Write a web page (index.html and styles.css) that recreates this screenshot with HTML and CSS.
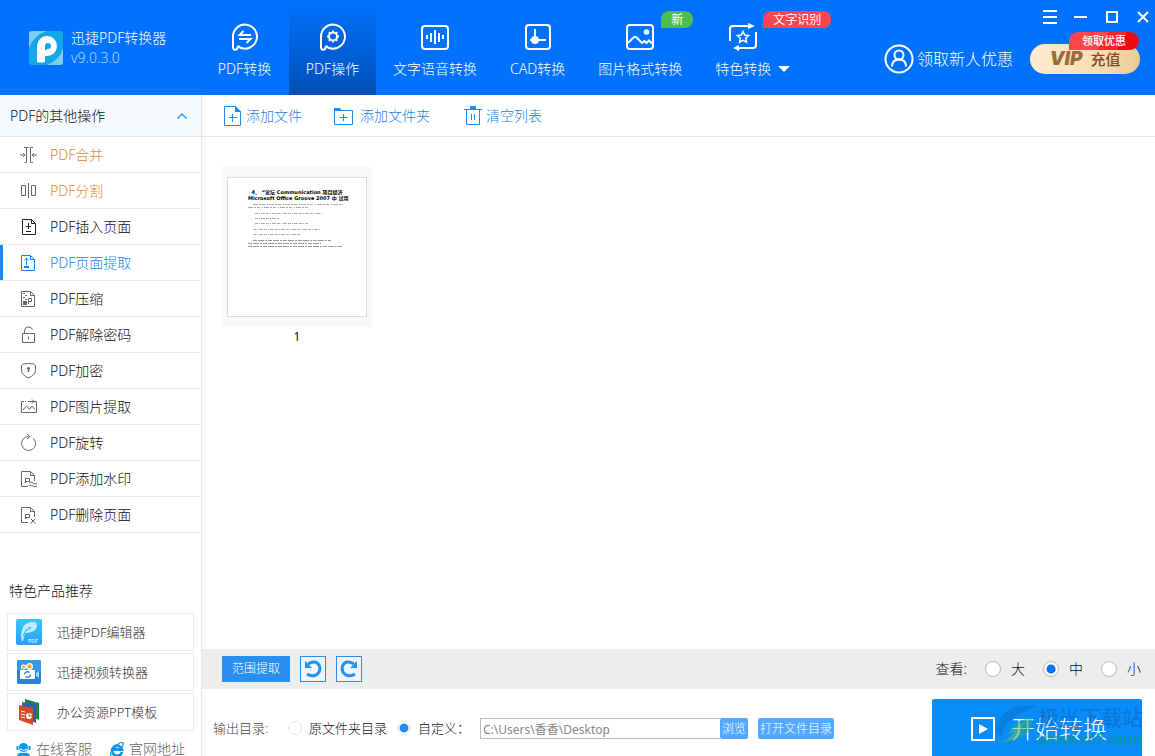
FILE: index.html
```html
<!DOCTYPE html>
<html lang="zh-CN">
<head>
<meta charset="utf-8">
<title>迅捷PDF转换器</title>
<link rel="stylesheet" href="styles.css">
</head>
<body>
<header class="header">
  <div class="brand">
    <svg class="brand-logo" width="34" height="34" viewBox="0 0 34 34" aria-hidden="true">
      <rect width="34" height="34" rx="3" fill="#12a8e8"/>
      <path d="M0 3Q0 0 3 0H18Q5 4 0 17ZM34 17V31Q34 34 31 34H18Q31 29 34 17Z" fill="#7dcdf5"/>
      <path d="M8 31V14A10 10 0 1 1 18.500 25H16V31Q12 32 8 31Z" fill="#fff"/>
      <path d="M16 20V15a3 3 0 1 1 3 3h-1Z" fill="#12a8e8"/>
    </svg>
    <div class="brand-text"><h1>迅捷PDF转换器</h1><span>v9.0.3.0</span></div>
  </div>
  <nav class="nav">
    <a class="nav-item" href="#convert">
      <svg width="28" height="28" viewBox="0 0 28 28" class="line2"><path d="M2 25V14A12 12 0 1 1 9 24.500Q6.500 22 6.500 25A2.300 2.300 0 0 1 2 25"/><path d="M20 12H8.500L12.500 8M8 16H19.500L15.500 20"/></svg>
      <span>PDF转换</span></a>
    <a class="nav-item active" href="#operate">
      <svg width="28" height="28" viewBox="0 0 28 28" class="line2"><path d="M2 25V14A12 12 0 1 1 9 24.500Q6.500 22 6.500 25A2.300 2.300 0 0 1 2 25"/><circle cx="14" cy="13.500" r="4"/><path d="M14 7.500v2M14 17.500v2M8 13.500h2M18 13.500h2M9.800 9.300l1.400 1.400M16.800 16.300l1.400 1.400M9.800 17.700l1.400-1.400M16.800 10.700l1.400-1.400"/></svg>
      <span>PDF操作</span></a>
    <a class="nav-item" href="#speech">
      <svg width="28" height="28" viewBox="0 0 28 28" class="line2"><rect x="1" y="3" width="26" height="23" rx="3"/><path d="M6 12v4M10 10v9M14 7v14M18 10v9M22 12v4"/></svg>
      <span>文字语音转换</span></a>
    <a class="nav-item" href="#cad">
      <svg width="28" height="28" viewBox="0 0 28 28" class="line2"><rect x="2" y="2" width="24" height="24" rx="3"/><path d="M11 6v11h11M6 17h5"/><circle cx="11" cy="17" r="3" fill="#fff"/></svg>
      <span>CAD转换</span></a>
    <a class="nav-item" href="#image">
      <svg width="28" height="28" viewBox="0 0 28 28" class="line2"><rect x="1" y="2" width="26" height="24" rx="3"/><path d="M2 20L7.500 14.500Q9 13 10.500 14.500L16 20L18.500 18L20.500 20L23 17.500L26 20.500"/><circle cx="20.500" cy="9" r="1.800" fill="#fff"/></svg>
      <span>图片格式转换</span><b class="badge badge-new">新</b></a>
    <a class="nav-item nav-more" href="#special">
      <svg width="28" height="28" viewBox="0 0 28 28" class="line2"><path d="M1 18V6Q1 3 4 3H20M27 9V22Q27 25 24 25H9"/><path d="M19 0l7 3-7 3ZM10 22l-6 3 6 3Z" fill="#fff" stroke="none"/><path d="M14 8.500l1.700 3.600 3.900.5-2.900 2.700.8 3.900-3.500-1.900-3.500 1.900.8-3.900-2.900-2.700 3.900-.5Z" stroke-width="1.500"/></svg>
      <span>特色转换</span><i class="caret"></i><b class="badge badge-ocr">文字识别</b></a>
  </nav>
  <div class="header-side">
    <div class="window-buttons">
      <button aria-label="菜单"><svg width="14" height="14" viewBox="0 0 14 14" class="line2"><path d="M0 1h14M0 7h14M0 13h14"/></svg></button>
      <button aria-label="最小化"><svg width="14" height="14" viewBox="0 0 14 14" class="line2"><path d="M0 7h13"/></svg></button>
      <button aria-label="最大化"><svg width="14" height="14" viewBox="0 0 14 14" class="line2"><path d="M2 2h10v10H2Z"/></svg></button>
      <button aria-label="关闭"><svg width="14" height="14" viewBox="0 0 14 14" class="line2"><path d="M2 2l10 10M12 2L2 12"/></svg></button>
    </div>
    <div class="account">
      <a class="newcomer" href="#offer"><svg width="30" height="30" viewBox="0 0 30 30" class="line2"><circle cx="15" cy="15" r="13.500"/><circle cx="15" cy="11" r="4.500"/><path d="M8 22.500Q8 15.500 15 15.500Q22 15.500 22 22.500"/></svg>领取新人优惠</a>
      <a class="vip" href="#vip">
        <span class="vip-word">VIP</span><span>充值</span><b class="vip-badge">领取优惠</b></a>
    </div>
  </div>
</header>
<div class="workspace">
  <aside class="sidebar">
    <button class="group-title"><span>PDF的其他操作</span><svg width="12" height="8" viewBox="0 0 12 8"><path d="M1.500 6.500L6 2l4.500 4.500" fill="none" stroke="#1c8cf5" stroke-width="1.300"/></svg></button>
    <ul class="menu">
      <li><a class="hot" href="#merge"><svg viewBox="0 0 18 18"><path d="M8.500 1.500H6.500M6.500 1.500V16.500H4.500M4 1.500H6.500M10.500 16.500V1.500H13M10.500 16.500H13M0 9h5M3 7l2 2-2 2M17 9h-5M14 7l-2 2 2 2"/></svg>PDF合并</a></li>
      <li><a class="hot" href="#split"><svg viewBox="0 0 18 18"><path d="M1.500 3.500h4v10h-4ZM11.500 3.500h4v10h-4ZM8.500 1v15"/></svg>PDF分割</a></li>
      <li><a href="#insert"><svg class="dark" viewBox="0 0 18 18"><path d="M2.500 1.500H11.500L15.500 5.500V16.500H2.500ZM11.500 1.500V5.500H15.500M8.500 5v6M6 8.500h5M6 13.500h5"/></svg>PDF插入页面</a></li>
      <li><a class="current" href="#extract" aria-current="page"><svg viewBox="0 0 18 18"><path d="M1.500 1.500H10.500L14.500 5.500V16.500H1.500ZM10.500 1.500V5.500H14.500M6.500 11V4M4 6.500L6.500 4L9 6.500"/><path d="M4 13h5" stroke-width="2"/></svg>PDF页面提取</a></li>
      <li><a href="#compress"><svg viewBox="0 0 18 18"><path d="M1.500 1.500H10.500L14.500 5.500V16.500H1.500ZM10.500 1.500V5.500H14.500M8.500 14V8.500H11.500V11.500H8.500M3 3.500h2M5 5.500h2M3 7.500h2M5 9.500h2"/><path d="M3 12h4M3 14h4" stroke-width="2"/></svg>PDF压缩</a></li>
      <li><a href="#unlock"><svg viewBox="0 0 18 18"><path d="M2.500 7.500h12v9h-12ZM4.500 7V5Q4.500 1 8.500 1Q11.500 1 12.500 3.500M8.500 10.500v3"/></svg>PDF解除密码</a></li>
      <li><a href="#encrypt"><svg viewBox="0 0 18 18"><path d="M3.500 2Q8.500 1 13.500 2L15.500 3.500V8Q15.500 13 8.500 16Q1.500 13 1.500 8V3.500Z"/><path d="M8.500 5v5M7 6.500h3" stroke-width="1.500"/></svg>PDF加密</a></li>
      <li><a href="#pictures"><svg viewBox="0 0 18 18"><path d="M4 3.500H1.500V14.500H16.500V3.500H14M5 3.500h1M8 3.500h1M9 3.500h5M12 1.500l2 2-2 2M3 12L6.500 8L9.500 11.500L12 8L15 11.500"/></svg>PDF图片提取</a></li>
      <li><a href="#rotate"><svg viewBox="0 0 18 18"><path d="M13 4.100A7 7 0 1 1 8.500 2.500M7 0l3 2.500L7 5"/></svg>PDF旋转</a></li>
      <li><a href="#watermark"><svg viewBox="0 0 18 18"><path d="M8 16.500H1.500V1.500H10.500L14.500 5.500V11M10.500 1.500V5.500H14.500M5.500 13V8.500H9.500V11.500H5.500M9 13q2-2 4 0t4 0M9 16q2-2 4 0t4 0"/></svg>PDF添加水印</a></li>
      <li><a href="#delete"><svg viewBox="0 0 18 18"><path d="M8 16.500H1.500V1.500H10.500L14.500 5.500V11M10.500 1.500V5.500H14.500M5.500 13V8.500H9.500V11.500H5.500M10.500 12.500l5 5M15.500 12.500l-5 5"/></svg>PDF删除页面</a></li>
    </ul>
    <section class="products">
      <h2>特色产品推荐</h2>
      <a class="product" href="#editor">
        <svg width="26" height="26" viewBox="0 0 26 26"><defs><linearGradient id="editor" x2="0" y2="1"><stop stop-color="#36c8f8"/><stop offset="1" stop-color="#2c9cf5"/></linearGradient></defs><rect width="26" height="26" rx="2" fill="url(#editor)"/><path d="M6 22L5 17Q6 5 12 4Q21 1 21 7Q20 14 9 14L7 22Z" fill="#c4ecff"/><path d="M7 18Q9 9 15 8Q16 10 9 12" fill="none" stroke="#47b9f5"/><text x="12" y="24" class="logo-label">PDF</text></svg>迅捷PDF编辑器</a>
      <a class="product" href="#video">
        <svg width="26" height="26" viewBox="0 0 26 26"><rect x="1" y="1" width="24" height="24" rx="2" fill="#2b80dc"/><path d="M3 1H23Q25 1 25 3V12H1V3Q1 1 3 1Z" fill="#3598e4"/><circle cx="7.500" cy="8" r="2.200" fill="#f8b62d" stroke="#fff"/><circle cx="13.500" cy="7.500" r="2.800" fill="#f8a51b" stroke="#fff" stroke-width="1.300"/><rect x="4" y="11" width="15" height="9" rx="1" fill="#fff"/><path d="M20 14l3-2v7l-3-2Z" fill="#84e1ff"/><path d="M8.500 15.500a3 3 0 0 1 5-2M14.500 15.500a3 3 0 0 1-5 2" fill="none" stroke="#2b80dc" stroke-width="1.400"/></svg>迅捷视频转换器</a>
      <a class="product" href="#ppt">
        <svg width="26" height="26" viewBox="0 0 26 26"><path d="M9 0L23 4V21L9 15Z" fill="#247c50"/><path d="M6 3L20 6V24L6 18Z" fill="#2b60ab"/><path d="M3 6L17 9V26L3 21Z" fill="#d64a2e"/><path d="M5 12l4 1M5 15l4 1M5 18l4 1" stroke="#fff"/><circle cx="13" cy="17" r="3" fill="#fff"/><path d="M13 17V13M13 17h3" stroke="#d64a2e"/></svg>办公资源PPT模板</a>
    </section>
    <div class="support">
      <a href="#service"><svg width="15" height="15" viewBox="0 0 15 15"><circle cx="7.500" cy="5.500" r="4.500" fill="#1296eb"/><path d="M1.500 4v4M13.500 4v4" stroke="#1296eb" stroke-width="2"/><path d="M4 7q4 3 7 0" fill="none" stroke="#fff"/><path d="M1 15q0-5 6.500-4Q14 10 14 15Z" fill="#1296eb"/></svg>在线客服</a>
      <a href="#site"><svg width="14" height="15" viewBox="0 0 14 15"><path d="M12 10A5 5 0 1 1 12 7.500H4" fill="none" stroke="#1296eb" stroke-width="2.800"/><path d="M1 14Q-1 11 5 5T13 1Q14 2 12 5" fill="none" stroke="#1296eb" stroke-width="1.300"/></svg>官网地址</a>
    </div>
  </aside>
  <main class="main">
    <div class="toolbar">
      <button><svg width="18" height="20" viewBox="0 0 18 20"><path d="M.5.500H11.500L16.500 5.500V19.500H.5ZM5 11.500h8M8.500 8v8"/><path d="M11 0v6h6Z" fill="#1c8cf5" stroke="none"/></svg>添加文件</button>
      <button class="folder"><svg width="20" height="20" viewBox="0 0 20 20"><path d="M.5 4.500H18.500V18.500H.5ZM5.500 11.500h8M9.500 8v7"/><path d="M0 2h6l2 3H0Z" fill="#1c8cf5" stroke="none"/></svg>添加文件夹</button>
      <button><svg width="18" height="20" viewBox="0 0 18 20"><path d="M0 3.500h18M2.500 3.500v15h13v-15M7.500 8v6M10.500 8v6"/><path d="M6 0h6v3H6Z" fill="#1c8cf5" stroke="none"/></svg>清空列表</button>
    </div>
    <div class="pages">
      <figure class="page-card">
        <div class="thumb">
          <div class="sheet">
            <p class="sheet-title">4、 “论坛 Communication 项目经济<br>Microsoft Office Groove 2007 中 试用</p>
            <svg width="98" height="46" viewBox="0 0 98 46"><g fill="none" stroke="#aaa" stroke-width="1"><path d="M5 1.500h90M0 4.500h62" stroke-dasharray="5 1 2 1 3 2 1 1"/><path d="M7 10.500h67M7 15.500h24M7 20.500h53M5 26.500h67M5 31.500h47" stroke-dasharray="3 1 1 1 4 1"/><path d="M5 37.500h78M0 40.500h73M0 43.500h95" stroke="#999" stroke-dasharray="4 1 6 1 2 1"/></g></svg>
          </div>
        </div>
        <figcaption>1</figcaption>
      </figure>
    </div>
    <div class="view-bar">
      <button class="range">范围提取</button>
      <button class="turn" aria-label="向左旋转"><svg width="18" height="18" viewBox="0 0 18 18"><path d="M4 4Q12-1 15.500 6Q17 12 12 15Q7 17 3 14" fill="none" stroke="#2a8ff0" stroke-width="3"/><path d="M1 1v7h7Z" fill="#2a8ff0"/></svg></button>
      <button class="turn" aria-label="向右旋转"><svg width="18" height="18" viewBox="0 0 18 18"><path d="M14 4Q6-1 2.500 6Q1 12 6 15Q11 17 15 14" fill="none" stroke="#2a8ff0" stroke-width="3"/><path d="M17 1v7h-7Z" fill="#2a8ff0"/></svg></button>
      <div class="sizes" role="radiogroup" aria-label="查看">
        <span>查看:</span>
        <label><input type="radio" name="size">大</label>
        <label><input type="radio" name="size" checked>中</label>
        <label><input type="radio" name="size">小</label>
      </div>
    </div>
    <div class="output">
      <span class="output-label">输出目录:</span>
      <label class="target"><input type="radio" name="target">原文件夹目录</label>
      <label class="target"><input type="radio" name="target" checked>自定义：</label>
      <input class="path" type="text" aria-label="输出路径" value="C:\Users\香香\Desktop">
      <button class="small">浏览</button>
      <button class="small open">打开文件目录</button>
      <div class="start-area">
        <button class="start"><svg width="24" height="24" viewBox="0 0 24 24"><path d="M1 1h22v22H1Z" fill="none" stroke="#fff" stroke-width="2"/><path d="M8 7l9 5-9 5Z" fill="#fff"/></svg>开始转换</button>
        <div class="mark">
          <svg width="44" height="42" viewBox="0 0 46 42"><path d="M45 1Q15-2 5 16Q-2 29 8 33Q9 15 45 1Z" fill="#0873c8"/><path d="M5 39Q23 41 33 31Q42 22 39 13Q20 18 15 27Q21 23 28 25Q25 35 5 39Z" fill="#2bab72"/><path d="M14 31Q21 21 34 18Q25 25 28 31Q20 37 9 38Q19 33 21 28Z" fill="#64bd70"/></svg>
          <div><b>极光下载站</b><strong>www.xz7.com</strong></div>
        </div>
      </div>
    </div>
  </main>
</div>
</body>
</html>
```

FILE: styles.css
```css
* { box-sizing: border-box; }
body {
  margin: 0;
  height: 100vh;
  overflow: hidden;
  display: flex;
  flex-direction: column;
  font: 300 14px/20px "Noto Sans", "Noto Sans CJK SC", sans-serif;
  color: #111;
  background: #fff;
}
h1, h2, p, ul, figure { margin: 0; padding: 0; font: inherit; }
ul { list-style: none; }
a { color: inherit; text-decoration: none; }
button { margin: 0; padding: 0; border: 0; background: none; font: inherit; color: inherit; cursor: pointer; }
svg { display: block; flex: none; }
.line2 { fill: none; stroke: #fff; stroke-width: 2; }

.header { display: flex; flex: none; height: 95px; background: #0072ff; color: #fff; }
.brand { display: flex; gap: 8px; width: 201px; padding: 28px 0 0 29px; flex: none; }
.brand-logo { margin-top: 3px; }
.brand-text span { display: block; color: #b5d5ff; }
.nav { display: flex; flex: none; gap: 1px; }
.nav-item {
  position: relative;
  display: flex;
  flex-direction: column;
  align-items: center;
  gap: 8px;
  min-width: 87px;
  padding: 23px 16px 0;
  white-space: nowrap;
}
.nav-item.active { background: linear-gradient(#0072ff, #0050b8); }
.nav-more { display: grid; grid-template-columns: 56px 10px; justify-items: center; align-content: start; }
.nav-more svg { grid-column: 1 / 2; }
.nav-more span { grid-row: 2; }
.caret { grid-row: 2; align-self: center; border: 6px solid transparent; border-top-color: #fff; border-bottom: 0; }
.badge {
  position: absolute;
  top: 11px;
  height: 17px;
  border-radius: 8px 8px 8px 0;
  font-size: 12px;
  font-weight: 400;
  line-height: 17px;
  text-align: center;
}
.badge-new { left: 79px; width: 32px; background: #4fbd4c; }
.badge-ocr { left: 64px; width: 68px; background: #ff464b; }

.header-side { margin-left: auto; display: flex; flex-direction: column; align-items: flex-end; }
.window-buttons { display: flex; gap: 17px; padding: 10px 5px 0 0; }
.account { display: flex; gap: 17px; padding: 20px 15px 0 0; }
.newcomer { display: flex; align-items: center; gap: 3px; font-size: 16px; }
.vip {
  position: relative;
  display: flex;
  align-items: center;
  justify-content: center;
  gap: 8px;
  width: 110px;
  height: 30px;
  border-radius: 15px;
  background: linear-gradient(100deg, #ffedd0, #f5dbae 70%, #eaca94);
  color: #7b4d26;
  font-size: 15px;
  font-weight: 500;
}
.vip-word { font: italic 900 19px/20px "Inter", sans-serif; color: #9c6c3d; }
.vip-badge {
  position: absolute;
  top: -12px;
  right: 1px;
  width: 70px;
  height: 18px;
  border-radius: 9px 9px 9px 0;
  background: linear-gradient(120deg, #ff464b 48%, #fc2529 49% 72%, #e80c10 73%);
  color: #fff;
  font-size: 11px;
  font-weight: 500;
  line-height: 18px;
  text-align: center;
}

.workspace { display: flex; flex: 1; min-height: 0; }
.sidebar { width: 202px; flex: none; border-right: 1px solid #e6e8eb; overflow: hidden; }
.group-title {
  display: flex;
  align-items: center;
  justify-content: space-between;
  width: 100%;
  height: 42px;
  padding: 0 13px 0 10px;
  border-bottom: 1px solid #e6e8eb;
  background: #f7faff;
}
.menu a {
  display: flex;
  align-items: center;
  gap: 12px;
  height: 36px;
  padding-left: 20px;
  border-bottom: 1px solid #e8eaec;
}
.menu svg { width: 18px; height: 18px; fill: none; stroke: #666; stroke-width: 1; }
.menu svg.dark { stroke: #222; }
.menu .hot { color: #df8b35; }
.menu .current { box-shadow: inset 3px 0 #1188ff; color: #1188ff; }
.menu .current svg { stroke: #1188ff; }
.products { display: flex; flex-direction: column; gap: 2px; padding: 48px 7px 0; }
.products h2 { padding: 0 2px 10px; }
.product {
  display: flex;
  align-items: center;
  gap: 15px;
  height: 38px;
  padding-left: 8px;
  border: 1px solid #ececec;
  color: #333;
  font-size: 13px;
}
.logo-label { font: bold 5px "Liberation Sans", sans-serif; fill: #c4ecff; }
.support { display: flex; gap: 18px; padding: 8px 0 0 16px; color: #666; }
.support a { display: flex; align-items: center; gap: 5px; }

.main { display: flex; flex-direction: column; flex: 1; min-width: 0; }
.toolbar { display: flex; gap: 32px; height: 42px; padding-left: 22px; border-bottom: 1px solid #e6e8eb; flex: none; }
.toolbar button { display: flex; align-items: center; gap: 4px; color: #1c83e8; }
.toolbar .folder { gap: 6px; margin-right: 2px; }
.toolbar svg { fill: none; stroke: #1c8cf5; stroke-width: 1; }
.pages { flex: 1; min-height: 0; padding: 30px 20px; }
.page-card { width: 150px; text-align: center; }
.thumb { height: 160px; padding: 10px 5px; background: #f8f8f8; }
.sheet { height: 140px; padding: 11px 20px; border: 1px solid #dcdcdc; background: #fff; }
.sheet-title { margin-bottom: 2px; color: #000; font: bold 5px/6px "DejaVu Sans", "Noto Sans CJK SC", sans-serif; white-space: nowrap; }
.page-card figcaption { font-size: 12px; font-weight: 400; }

.view-bar { display: flex; align-items: center; gap: 10px; height: 40px; flex: none; padding: 0 14px 0 20px; background: #ededed; }
.range { width: 68px; height: 26px; background: #288ff1; color: #fff; font-size: 12px; }
.turn { display: grid; place-items: center; width: 26px; height: 26px; border: 1px solid #288ff1; background: #edf6ff; }
.sizes { display: flex; gap: 18px; margin-left: auto; }
.sizes label { display: flex; align-items: center; gap: 10px; }
input[type="radio"] { appearance: none; margin: 0; width: 16px; height: 16px; border: 1px solid #b8b8b8; border-radius: 50%; background: #fff; flex: none; }
input[type="radio"]:checked { background: radial-gradient(circle, #0872f5 4px, #fff 5px); }

.output { display: flex; height: 67px; flex: none; padding: 0 13px 0 11px; align-items: flex-start; }
.output > * { margin-top: 29px; }
.output-label { width: 75px; color: #444; font-size: 13px; flex: none; }
.target { display: flex; align-items: center; gap: 7px; margin-right: 10px; font-size: 13px; white-space: nowrap; }
.target input[type="radio"] { width: 14px; height: 14px; border-color: #e4e4e4; }
.target input[type="radio"]:checked { background: radial-gradient(circle, #238cf0 4px, #fff 5px); }
.path { width: 240px; height: 21px; margin-bottom: 0; padding: 0 2px; border: 1px solid #bbb; border-right: 0; border-radius: 0; color: #888; font: 12px/18px "Noto Sans", "Noto Sans CJK SC", sans-serif; }
.small { height: 21px; padding: 0 2px; border-radius: 2px; background: #53a8ff; color: #fff; font-size: 12px; line-height: 20px; white-space: nowrap; }
.open { margin-left: 10px; }
.start-area { position: relative; margin: 10px 0 0 auto; }
.start { display: flex; align-items: center; justify-content: center; gap: 16px; width: 210px; height: 60px; padding-left: 4px; border-radius: 2px; background: #088cfa; color: #fff; font-size: 24px; }
.mark { position: absolute; left: 62px; top: 5px; display: flex; opacity: 0.55; pointer-events: none; }
.mark b, .mark strong { display: block; white-space: nowrap; }
.mark b { color: #0864b0; font-size: 21px; line-height: 26px; }
.mark strong { color: #129b6a; font: bold 16px/20px "Liberation Sans", sans-serif; }
```
